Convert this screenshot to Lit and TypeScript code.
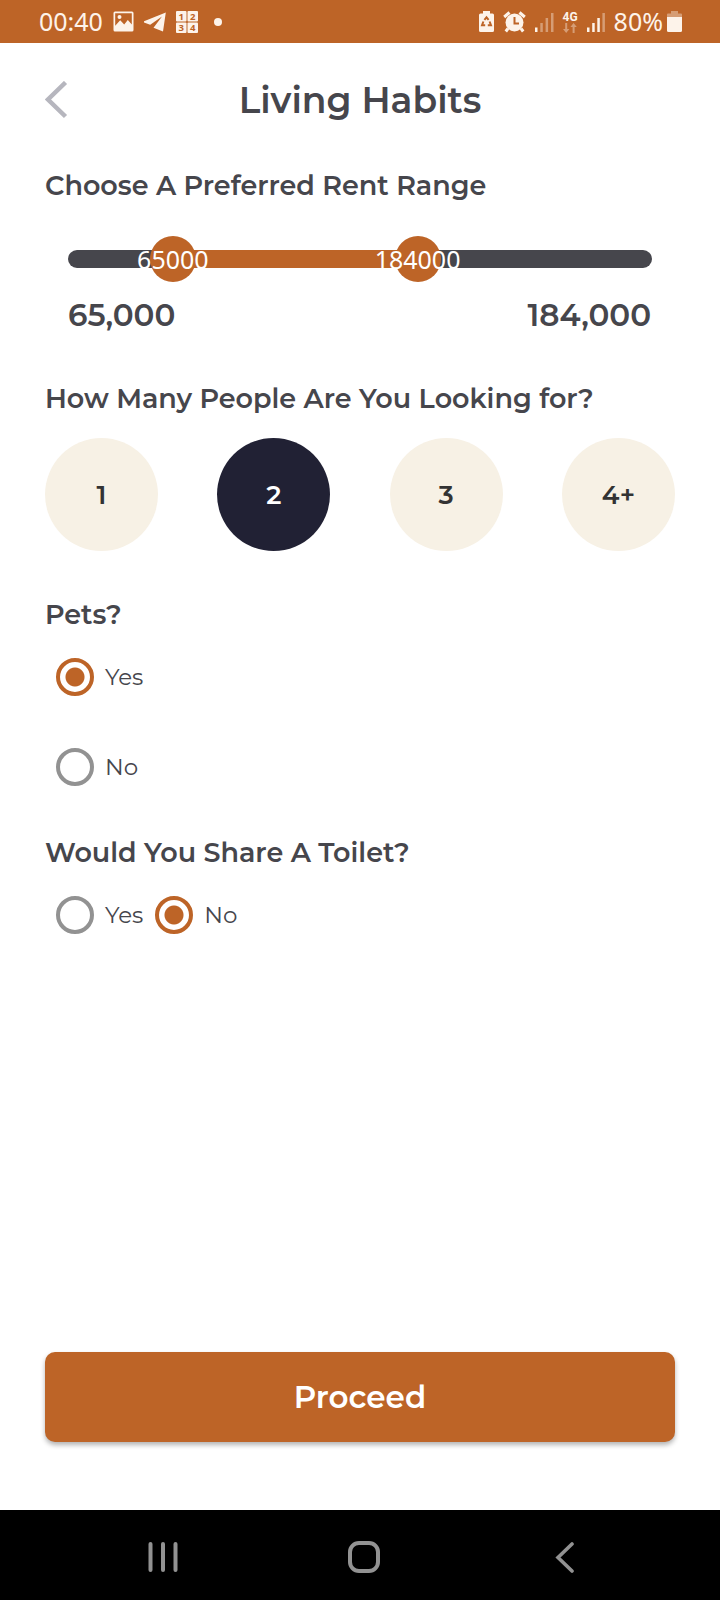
import { LitElement, html, css } from "lit";
import { customElement, state } from "lit/decorators.js";

const MIN_RENT = 14000;
const MAX_RENT = 298000;

@customElement("status-bar")
class StatusBar extends LitElement {
  static styles = css`
    :host {
      display: flex;
      align-items: center;
      justify-content: space-between;
      height: 43px;
      padding: 0 38px 0 39px;
      background: #bd6427;
      color: #fdf3ea;
      font: 400 25px/43px "Noto Sans", Roboto, sans-serif;
    }
    svg {
      display: block;
      overflow: visible;
      fill: currentColor;
    }
    .side {
      display: flex;
      align-items: center;
    }
    .left {
      gap: 10px;
    }
    .right {
      gap: 9px;
    }
    .dot {
      width: 8px;
      height: 8px;
      margin-left: 6px;
      border-radius: 50%;
      background: currentColor;
    }
    .network {
      display: grid;
      justify-items: center;
      font: 700 12px/12px Roboto, sans-serif;
    }
    .battery {
      display: flex;
      align-items: center;
      gap: 4px;
    }
    .dim {
      opacity: 0.4;
    }
    .digits {
      font: 700 10px "Open Sans", sans-serif;
      fill: #bd6427;
      text-anchor: middle;
    }
  `;

  render() {
    return html`
      <div class="side left">
        <span>00:40</span>
        <svg width="21" height="21" viewBox="0 0 21 21" aria-hidden="true">
          <path
            fill-rule="evenodd"
            d="M2 0.500h17a1.500 1.500 0 0 1 1.500 1.500v17a1.500 1.500 0 0 1-1.500 1.500H2A1.500 1.500 0 0 1 .5 19V2A1.500 1.500 0 0 1 2 .5zM2.200 2.200v12.500l5-5.500 4 4.300 3.600-4.500 4 4.500V2.200zM6.500 4a2 2 0 1 1 0 4 2 2 0 0 1 0-4z"
          />
        </svg>
        <svg width="22" height="20" viewBox="0 0 22 20" aria-hidden="true">
          <path d="M21.800 .4 19 19.500 9.500 15.800 18 4.500 6.200 12.800 0 10.600V9.300z" />
        </svg>
        <svg width="22" height="22" viewBox="0 0 23 23" aria-hidden="true">
          <rect x="0" y="0" width="11" height="11" rx="1" />
          <rect x="12" y="0" width="11" height="11" rx="1" />
          <rect x="0" y="12" width="11" height="11" rx="1" />
          <rect x="12" y="12" width="11" height="11" rx="1" />
          <g class="digits">
            <text x="5.500" y="9.200">1</text>
            <text x="17.500" y="9.200">2</text>
            <text x="5.500" y="21.200">3</text>
            <text x="17.500" y="21.200">4</text>
          </g>
        </svg>
        <span class="dot"></span>
      </div>
      <div class="side right">
        <svg width="15" height="21" viewBox="0 0 15 21" aria-hidden="true">
          <path d="M4 0h7v2.500h2.500a1.500 1.500 0 0 1 1.500 1.500v15.500a1.500 1.500 0 0 1-1.500 1.500h-12A1.500 1.500 0 0 1 0 19.500V4a1.500 1.500 0 0 1 1.500-1.500H4z" />
          <g fill="none" stroke="#bd6427" stroke-width="2">
            <path d="M5.400 8.900 7.500 6.300l2.100 2.600" />
            <path d="M4.400 10.500 3 14.300h3.200" />
            <path d="M10.600 10.500 12 14.300H8.800" />
          </g>
        </svg>
        <svg width="23" height="22" viewBox="0 0 23 22" aria-hidden="true">
          <g fill="none" stroke="currentColor" stroke-width="3">
            <path d="M1.200 6 6.500 1.500M21.800 6 16.500 1.500" />
            <path d="M5 17.500 2.800 20.500M18 17.500l2.200 3" />
          </g>
          <circle cx="11.500" cy="11.500" r="9" />
          <path d="M11.500 6v6.500H16" fill="none" stroke="#bd6427" stroke-width="2" />
        </svg>
        <svg width="19" height="20" viewBox="0 0 19 20" aria-hidden="true">
          <rect x="0" y="15.500" width="2.500" height="4.500" />
          <g class="dim">
            <rect x="5.300" y="11" width="2.500" height="9" />
            <rect x="10.600" y="6" width="2.500" height="14" />
            <rect x="16" y="1" width="2.500" height="19" />
          </g>
        </svg>
        <div class="network">
          <span>4G</span>
          <svg class="dim" width="14" height="10" viewBox="0 0 14 10" aria-hidden="true">
            <path d="M2.200 0h2v6H6.400L3.200 10 0 6h2.200zM9.600 10h2V4h2.200L10.600 0 7.400 4h2.200z" />
          </svg>
        </div>
        <svg width="18" height="20" viewBox="0 0 18 20" aria-hidden="true">
          <rect x="0" y="15.500" width="2.500" height="4.500" />
          <rect x="5.200" y="11" width="2.500" height="9" />
          <rect x="10.300" y="6" width="2.500" height="14" />
          <rect class="dim" x="15.400" y="1" width="2.500" height="19" />
        </svg>
        <div class="battery">
          <span>80%</span>
          <svg width="15" height="21" viewBox="0 0 15 21" aria-hidden="true">
            <path class="dim" d="M4 0h7v2.500h3a1 1 0 0 1 1 1V6H0V3.500a1 1 0 0 1 1-1h3z" />
            <path d="M0 6h15v13.500a1.500 1.500 0 0 1-1.500 1.500h-12A1.500 1.500 0 0 1 0 19.500z" />
          </svg>
        </div>
      </div>
    `;
  }
}

@customElement("rent-range")
class RentRange extends LitElement {
  static styles = css`
    :host {
      display: block;
      color: #46464c;
    }
    .slider {
      position: relative;
      display: grid;
      align-items: center;
      height: 46px;
    }
    .track,
    .thumb {
      grid-area: 1 / 1;
    }
    .track {
      position: relative;
      height: 18px;
      margin: 0 23px;
      border-radius: 9px;
      background: #46464c;
    }
    .fill {
      position: absolute;
      top: 0;
      bottom: 0;
      background: #bd6427;
    }
    .thumb {
      position: relative;
      appearance: none;
      width: 100%;
      height: 46px;
      margin: 0;
      background: none;
      pointer-events: none;
    }
    .thumb::-webkit-slider-thumb {
      appearance: none;
      width: 46px;
      height: 46px;
      border: 0;
      border-radius: 50%;
      background: #bd6427;
      pointer-events: auto;
      cursor: pointer;
    }
    .bubbles {
      position: absolute;
      inset: 0 23px;
      pointer-events: none;
    }
    .bubble {
      position: absolute;
      transform: translateX(-50%);
      color: #fff;
      font: 400 25px/46px "Noto Sans", Roboto, sans-serif;
    }
    .values {
      display: flex;
      justify-content: space-between;
      margin: 13px 24px 0 23px;
      font-size: 31px;
      font-weight: 600;
      line-height: 40px;
    }
  `;

  @state() low = 65000;
  @state() high = 184000;

  percent(value: number) {
    return ((value - MIN_RENT) / (MAX_RENT - MIN_RENT)) * 100;
  }

  setLow(e: Event) {
    const input = e.target as HTMLInputElement;
    this.low = Math.min(Number(input.value), this.high);
    input.value = String(this.low);
  }

  setHigh(e: Event) {
    const input = e.target as HTMLInputElement;
    this.high = Math.max(Number(input.value), this.low);
    input.value = String(this.high);
  }

  render() {
    const from = this.percent(this.low);
    const to = this.percent(this.high);
    return html`
      <div class="slider">
        <div class="track">
          <div class="fill" style="left:${from}%;right:${100 - to}%"></div>
        </div>
        <input class="thumb" type="range" aria-label="Minimum rent" min=${MIN_RENT} max=${MAX_RENT}
          step="1000" .value=${String(this.low)} @input=${this.setLow} />
        <input class="thumb" type="range" aria-label="Maximum rent" min=${MIN_RENT} max=${MAX_RENT}
          step="1000" .value=${String(this.high)} @input=${this.setHigh} />
        <div class="bubbles" aria-hidden="true">
          <span class="bubble" style="left:${from}%">${this.low}</span>
          <span class="bubble" style="left:${to}%">${this.high}</span>
        </div>
      </div>
      <div class="values">
        <span>${this.low.toLocaleString("en-US")}</span>
        <span>${this.high.toLocaleString("en-US")}</span>
      </div>
    `;
  }
}

@customElement("app-root")
class AppRoot extends LitElement {
  static styles = css`
    :host {
      display: flex;
      flex-direction: column;
      min-height: 100vh;
      background: #fff;
      color: #46464c;
      font-family: Montserrat, Inter, sans-serif;
    }
    * {
      box-sizing: border-box;
    }
    button {
      border: 0;
      padding: 0;
      background: none;
      color: inherit;
      font-family: inherit;
      cursor: pointer;
    }
    svg {
      display: block;
    }
    .header {
      display: grid;
      grid-template-columns: 24px 1fr 24px;
      align-items: center;
      height: 114px;
      padding: 0 45px;
    }
    .title {
      margin: 0;
      text-align: center;
      font-size: 36px;
      font-weight: 600;
      line-height: 50px;
    }
    .content {
      flex: 1;
      display: flex;
      flex-direction: column;
      padding: 11px 45px 68px;
    }
    .group {
      margin: 0 0 46px;
      padding: 0;
      border: 0;
      min-width: 0;
    }
    .pets {
      margin-bottom: 23px;
    }
    .heading {
      display: block;
      margin: 0;
      padding: 0;
      font-size: 27px;
      font-weight: 600;
      line-height: 35px;
    }
    .range {
      margin-top: 33px;
    }
    .people {
      display: flex;
      justify-content: space-between;
      margin-top: 22px;
    }
    .person {
      width: 113px;
      height: 113px;
      border-radius: 50%;
      background: #f7f1e5;
      color: #333;
      font-size: 26px;
      font-weight: 600;
    }
    .person.selected {
      background: #212134;
      color: #fff;
    }
    .inline {
      display: flex;
      gap: 1px;
    }
    .option {
      display: flex;
      align-items: center;
      gap: 11px;
      width: max-content;
      height: 90px;
      padding-left: 11px;
      font-size: 23px;
      font-weight: 400;
      cursor: pointer;
    }
    .radio {
      appearance: none;
      width: 38px;
      height: 38px;
      margin: 0;
      border: 4px solid #929292;
      border-radius: 50%;
      background: #fff;
      cursor: pointer;
    }
    .radio:checked {
      border-color: #bd6427;
      background: radial-gradient(circle, #bd6427 9px, #fff 10px);
    }
    .proceed {
      height: 90px;
      margin-top: auto;
      border-radius: 10px;
      background: #bd6427;
      box-shadow: 0 3px 5px rgba(0, 0, 0, 0.3);
      color: #fff;
      font-size: 31px;
      font-weight: 600;
    }
    .nav {
      display: flex;
      justify-content: space-between;
      align-items: center;
      height: 90px;
      padding: 4px 136px 0 144px;
      background: #000;
    }
    .key {
      display: grid;
      place-items: center;
      width: 38px;
      height: 48px;
    }
  `;

  @state() people = "2";

  radio(name: string, label: string, checked: boolean) {
    return html`
      <label class="option">
        <input class="radio" type="radio" name=${name} value=${label} ?checked=${checked} />
        <span>${label}</span>
      </label>
    `;
  }

  render() {
    return html`
      <status-bar></status-bar>
      <header class="header">
        <button aria-label="Back">
          <svg width="24" height="38" viewBox="0 0 24 38">
            <path d="M20.500 1.500 3 18.500 20.500 35.500" fill="none" stroke="#b6b6be" stroke-width="4.500" />
          </svg>
        </button>
        <h1 class="title">Living Habits</h1>
      </header>
      <main class="content">
        <section class="group">
          <h2 class="heading">Choose A Preferred Rent Range</h2>
          <rent-range class="range"></rent-range>
        </section>
        <section class="group">
          <h2 class="heading">How Many People Are You Looking for?</h2>
          <div class="people">
            ${["1", "2", "3", "4+"].map(
              (n) => html`<button
                class="person ${n === this.people ? "selected" : ""}"
                aria-pressed=${n === this.people}
                @click=${() => (this.people = n)}
              >${n}</button>`
            )}
          </div>
        </section>
        <fieldset class="group pets">
          <legend class="heading">Pets?</legend>
          ${this.radio("pets", "Yes", true)} ${this.radio("pets", "No", false)}
        </fieldset>
        <fieldset class="group">
          <legend class="heading">Would You Share A Toilet?</legend>
          <div class="inline">
            ${this.radio("toilet", "Yes", false)} ${this.radio("toilet", "No", true)}
          </div>
        </fieldset>
        <button class="proceed">Proceed</button>
      </main>
      <nav class="nav">
        <button class="key" aria-label="Recent apps">
          <svg width="30" height="32" viewBox="0 0 30 32">
            <path d="M2.500 3v26M15 3v26M27.500 3v26" stroke="#929292" stroke-width="4" stroke-linecap="round" />
          </svg>
        </button>
        <button class="key" aria-label="Home">
          <svg width="34" height="34" viewBox="0 0 34 34">
            <rect x="3" y="3" width="28" height="28" rx="9" fill="none" stroke="#929292" stroke-width="4" />
          </svg>
        </button>
        <button class="key" aria-label="Back">
          <svg width="20" height="32" viewBox="0 0 20 32">
            <path d="M17 3 3 16.500 17 30" fill="none" stroke="#929292" stroke-width="3.600" stroke-linecap="round" />
          </svg>
        </button>
      </nav>
    `;
  }
}
